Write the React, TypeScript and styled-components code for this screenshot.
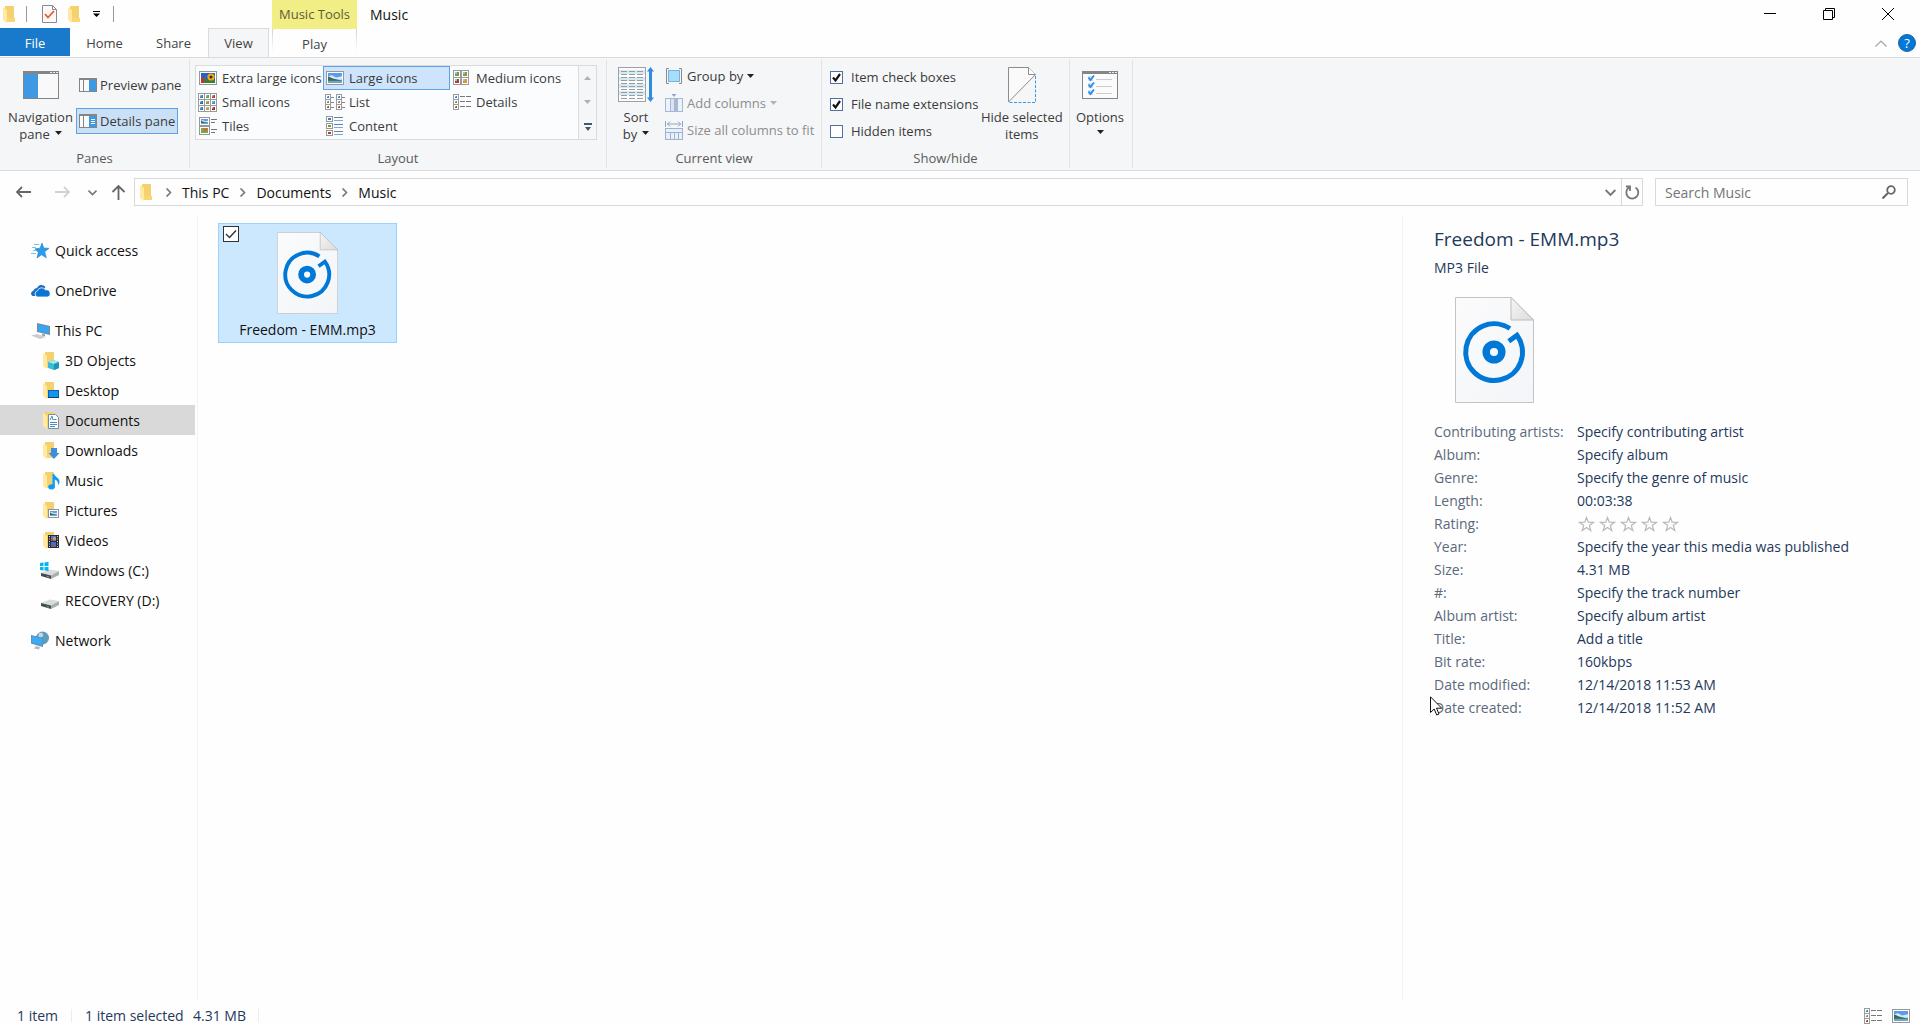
import React from "react";
import styled, { createGlobalStyle, css } from "styled-components";

const line = "#dadbdc";
const ink = "#1e395b";
const blue = "#0078d7";

const GlobalStyle = createGlobalStyle`
  *, *::before, *::after { box-sizing: border-box; }
  body { margin: 0; background: #fefefe; }
  body, button, input { font-family: "Open Sans", "Noto Sans", sans-serif; font-size: 14px; }
  button { padding: 0; border: 0; background: none; color: inherit; }
  svg { display: block; flex: none; }
`;

/* ---------- window frame ---------- */

const Window = styled.div`
  display: flex;
  flex-direction: column;
  min-height: 100vh;
  color: #111;
  line-height: 20px;
`;

const Header = styled.header`
  display: flex;
  height: 57px;
`;

const HeaderLeft = styled.div`
  display: flex;
  flex-direction: column;
  width: 272px;
`;

const QuickBar = styled.div`
  display: flex;
  align-items: center;
  height: 29px;
  padding-left: 3px;
`;

const QuickButton = styled.button<{ $w: number }>`
  display: flex;
  justify-content: center;
  width: ${(p) => p.$w}px;
`;

const QuickSeparator = styled.span<{ $gap: number }>`
  width: 1px;
  height: 16px;
  margin: 0 ${(p) => p.$gap}px 0 11px;
  background: #999;
`;

const TabStrip = styled.nav`
  display: flex;
  height: 29px;
  font-size: 13px;
  color: #444;
`;

const Tab = styled.button<{ $kind?: "file" | "active" }>`
  width: 69px;
  height: 28px;
  padding-top: 2px;
  font-size: 13px;
  ${(p) =>
    p.$kind === "file" &&
    css`
      width: 70px;
      background: #1979ca;
      color: #fff;
    `}
  ${(p) =>
    p.$kind === "active" &&
    css`
      width: 61px;
      height: 29px;
      padding-top: 0;
      border: 1px solid ${line};
      border-bottom: 0;
      background: #f5f6f7;
    `}
`;

const ToolTabs = styled.div`
  display: flex;
  flex-direction: column;
  width: 85px;
`;

const ToolTitle = styled.div`
  height: 29px;
  padding-top: 4px;
  background: #f0ee84;
  color: #5e5c3a;
  font-size: 13px;
  text-align: center;
`;

const ToolTab = styled.button`
  height: 28px;
  padding-top: 2px;
  border: solid;
  border-width: 0 1px;
  border-image: linear-gradient(#d0d1d2, #fefefe 80%) 1;
  color: #444;
  font-size: 13px;
`;

const WindowTitle = styled.h1`
  flex: 1;
  margin: 0;
  padding: 5px 0 0 13px;
  font-size: 14px;
  font-weight: 400;
  line-height: 20px;
`;

const HeaderRight = styled.div`
  display: flex;
  flex-direction: column;
  align-items: flex-end;
`;

const Controls = styled.div`
  display: flex;
  height: 29px;
  padding-right: 3px;
`;

const ControlButton = styled.button`
  display: flex;
  align-items: center;
  justify-content: center;
  width: 59px;
  height: 28px;
`;

const HelpRow = styled.div`
  display: flex;
  align-items: center;
  gap: 11px;
  height: 28px;
  padding-right: 4px;
`;

const HelpButton = styled.button`
  width: 18px;
  height: 18px;
  border: 1px solid #2a62a0;
  border-radius: 50%;
  background: ${blue};
  color: #fff;
  font-size: 13px;
  line-height: 16px;
`;

/* ---------- ribbon ---------- */

const Ribbon = styled.section`
  display: flex;
  height: 114px;
  padding: 2px 0;
  border: solid ${line};
  border-width: 1px 0;
  background: #f5f6f7;
  color: #3b3b3b;
  font-size: 13px;
  line-height: 17px;

  button {
    font-size: 13px;
    line-height: 17px;
  }
`;

const Group = styled.div<{ $w: number }>`
  display: flex;
  flex-direction: column;
  width: ${(p) => p.$w}px;
  border-right: 1px solid #e2e3e4;
`;

const GroupBody = styled.div<{ $left?: number; $gap?: number }>`
  display: flex;
  gap: ${(p) => p.$gap ?? 0}px;
  height: 89px;
  padding-left: ${(p) => p.$left ?? 5}px;
`;

const GroupLabel = styled.div`
  height: 20px;
  color: #5a5a5a;
  line-height: 20px;
  text-align: center;
`;

const BigButton = styled.button<{ $w: number }>`
  display: flex;
  flex-direction: column;
  align-items: center;
  width: ${(p) => p.$w}px;
  padding-top: 6px;
  white-space: nowrap;
`;

const BigIcon = styled.span`
  display: flex;
  align-items: center;
  height: 38px;
  margin-bottom: 5px;
`;

const Stack = styled.div<{ $gap: number; $top: number }>`
  display: flex;
  flex-direction: column;
  align-items: flex-start;
  gap: ${(p) => p.$gap}px;
  padding-top: ${(p) => p.$top}px;
`;

const PaneButton = styled.button<{ $on?: boolean }>`
  display: flex;
  align-items: center;
  gap: 3px;
  height: 26px;
  padding: 0 2px;
  border: 1px solid ${(p) => (p.$on ? "#62a2e4" : "transparent")};
  background: ${(p) => (p.$on ? "#c9e0f7" : "transparent")};
  white-space: nowrap;
`;

const SmallButton = styled.button`
  display: flex;
  align-items: center;
  gap: 4px;
  height: 24px;
  white-space: nowrap;

  &:disabled {
    color: #8d8d8d;
  }
`;

const GalleryBox = styled.div`
  display: flex;
  width: 402px;
  height: 75px;
  margin-top: 5px;
`;

const Gallery = styled.div`
  display: grid;
  flex: 1;
  grid-template-columns: repeat(3, 127px);
  grid-auto-rows: 24px;
  border: 1px solid ${line};
  background: #fbfcfd;
`;

const GalleryItem = styled.button<{ $on?: boolean }>`
  display: flex;
  align-items: center;
  gap: 4px;
  padding-left: 1px;
  border: 1px solid ${(p) => (p.$on ? "#62a2e4" : "transparent")};
  background: ${(p) => (p.$on ? "#cde4fc" : "transparent")};
  white-space: nowrap;
`;

const GalleryScroll = styled.div`
  display: flex;
  flex-direction: column;
  width: 18px;
  border: 1px solid ${line};
  border-left: 0;

  button {
    display: flex;
    flex: 1;
    align-items: center;
    justify-content: center;
  }
`;

const CheckLabel = styled.label`
  display: flex;
  align-items: center;
  gap: 8px;
  height: 20px;
  white-space: nowrap;
`;

const CheckWrap = styled.span`
  display: grid;
  place-items: center;

  > * {
    grid-area: 1 / 1;
  }
  svg {
    pointer-events: none;
  }
  input:not(:checked) + svg {
    visibility: hidden;
  }
`;

const CheckInput = styled.input<{ $size: number; $edge: string }>`
  appearance: none;
  width: ${(p) => p.$size}px;
  height: ${(p) => p.$size}px;
  margin: 0;
  border: 1px solid ${(p) => p.$edge};
  background: #fff;
`;

/* ---------- address bar ---------- */

const AddressRow = styled.div`
  display: flex;
  align-items: center;
  height: 42px;
  padding-right: 12px;
`;

const NavButtons = styled.div`
  display: flex;
  align-items: center;
  width: 134px;
  padding-left: 14px;
`;

const NavButton = styled.button<{ $w: number }>`
  display: flex;
  align-items: center;
  width: ${(p) => p.$w}px;
  height: 28px;
`;

const AddressBox = styled.div`
  display: flex;
  flex: 1;
  align-items: center;
  height: 28px;
  padding-left: 5px;
  border: 1px solid #d9d9d9;
`;

const Crumbs = styled.div`
  display: flex;
  flex: 1;
  align-items: center;
  gap: 9px;
  padding-left: 12px;
`;

const AddressButton = styled.button<{ $edge?: boolean }>`
  display: flex;
  align-items: center;
  justify-content: center;
  width: 21px;
  height: 26px;
  border-left: ${(p) => (p.$edge ? "1px solid #d9d9d9" : "0")};
`;

const SearchBox = styled.label`
  display: flex;
  align-items: center;
  width: 253px;
  height: 28px;
  margin-left: 12px;
  padding: 0 11px 0 9px;
  border: 1px solid #d9d9d9;
`;

const SearchInput = styled.input`
  flex: 1;
  min-width: 0;
  padding: 0;
  border: 0;
  outline: 0;
  background: none;

  &::placeholder {
    color: #757575;
    opacity: 1;
  }
`;

/* ---------- body ---------- */

const Body = styled.div`
  display: flex;
  flex: 1;
  padding-top: 2px;
`;

const Sidebar = styled.nav`
  display: flex;
  flex-direction: column;
  gap: 10px;
  width: 198px;
  padding: 20px 2px 0 0;
  border-right: 1px solid #f3f3f3;
`;

const Branch = styled.div`
  display: flex;
  flex-direction: column;
`;

const TreeLink = styled.a<{ $child?: boolean; $on?: boolean }>`
  display: flex;
  align-items: center;
  gap: 5px;
  height: 30px;
  padding: 1px 0 0 ${(p) => (p.$child ? 40 : 30)}px;
  background: ${(p) => (p.$on ? "#d9d9d9" : "transparent")};
  color: #111;
  text-decoration: none;
  white-space: nowrap;
`;

const Files = styled.main`
  flex: 1;
  padding: 8px 20px;
`;

const Tile = styled.div`
  position: relative;
  display: flex;
  flex-direction: column;
  align-items: center;
  width: 179px;
  height: 120px;
  padding-top: 8px;
  border: 1px solid #99d1ff;
  background: #cce8ff;
`;

const TileCheck = styled.label`
  position: absolute;
  top: 2px;
  left: 4px;
`;

const TileName = styled.span`
  margin-top: 6px;
`;

const Details = styled.aside`
  position: relative;
  width: 518px;
  padding: 10px 0 0 31px;
  border-left: 1px solid #f3f3f3;
  color: ${ink};
`;

const DetailsTitle = styled.h2`
  margin: 0;
  font-size: 19px;
  font-weight: 400;
  line-height: 28px;
`;

const DetailsType = styled.p`
  margin: 5px 0 0;
`;

const Preview = styled.div`
  padding: 19px 0 17px 21px;
`;

const Properties = styled.dl`
  display: grid;
  grid-template-columns: 143px 1fr;
  grid-auto-rows: 23px;
  margin: 0;
  line-height: 23px;
`;

const Term = styled.dt`
  color: #5b697c;
`;

const Value = styled.dd`
  display: flex;
  align-items: center;
  margin: 0;
`;

const Star = styled.button`
  width: 21px;
  padding-left: 1px;
`;

const Pointer = styled.span`
  position: absolute;
  top: 481px;
  left: 27px;
`;

const StatusBar = styled.footer`
  display: flex;
  align-items: center;
  height: 25px;
  padding: 4px 9px 0 17px;
  color: ${ink};
`;

const StatusCell = styled.span<{ $w: number }>`
  width: ${(p) => p.$w}px;
`;

const StatusEdge = styled.span`
  width: 1px;
  height: 13px;
  margin-right: 13px;
  background: #ececec;
`;

const StatusViews = styled.div`
  display: flex;
  gap: 8px;
  margin-left: auto;
`;

/* ---------- drawings ---------- */

const Caret = ({ color = "#222" }: { color?: string }) => (
  <svg width="7" height="4" viewBox="0 0 7 4"><path d="M0 0h7L3.5 4z" fill={color} /></svg>
);

const CaretInline = styled.span`
  display: inline-flex;
  padding-left: 5px;
  vertical-align: 4px;
`;

const CaretBelow = styled.span`
  margin-top: 4px;
`;

const FolderShape = () => (
  <>
    <path d="M2 0h9v12h1v4H2z" fill="#f7d774" />
    <path d="M2 0h9v12H7L2 8z" fill="#f4d06e" />
    <path d="M0 1l4 3v13l-4-3z" fill="#ffe9a3" />
  </>
);

const Folder = () => (
  <svg width="12" height="17" viewBox="0 0 12 17"><FolderShape /></svg>
);

const FolderWith = ({ children }: { children: React.ReactNode }) => (
  <svg width="20" height="20" viewBox="0 0 20 20">
    <g transform="translate(3 1)"><FolderShape /></g>
    {children}
  </svg>
);

const Chevron = ({ dir, color = "#777", size = 9 }: { dir: "right" | "down"; color?: string; size?: number }) => (
  <svg width={size} height={size} viewBox="0 0 9 9" fill="none" stroke={color} strokeWidth="1.6">
    <path d={dir === "right" ? "M2.5 .5l4 4-4 4" : "M.5 2.5l4 4 4-4"} />
  </svg>
);

const Landscape = ({ x = 0, y = 0, w = 14, h = 9 }) => (
  <svg x={x} y={y} width={w} height={h} viewBox="0 0 14 9" preserveAspectRatio="none">
    <rect width="14" height="9" fill="#5b9bea" />
    <path d="M0 3l4-1 4 2 6-1v3H0z" fill="#d6ecfa" />
    <path d="M0 3l5 2 9 2v1H0z" fill="#3c6b5a" />
    <path d="M0 7h14v2H0z" fill="#6fa6c6" />
  </svg>
);

const PictureIcon = ({ flower }: { flower?: boolean }) => (
  <svg width="20" height="18" viewBox="0 0 20 18">
    <rect x="1.5" y="2.5" width="17" height="13" fill="#fff" stroke="#979797" />
    {flower ? (
      <>
        <rect x="3" y="4" width="14" height="10" fill="#2d5fc4" />
        <path d="M3 11l3-3 3 3 3-1 5 1v3H3z" fill="#3f7d33" />
        <path d="M3 8l3 2v4H3z" fill="#c8322b" />
        <circle cx="13" cy="8" r="3.6" fill="#e7ad1c" />
        <circle cx="13" cy="8" r="1.5" fill="#4b2410" />
      </>
    ) : (
      <Landscape x={3} y={4} w={14} h={10} />
    )}
  </svg>
);

const thumbColors = ["#3b7fc4", "#6f9f3a", "#c0392b", "#2f6d8e", "#8a9a3c", "#4b8ed0", "#3a77b8", "#d8952c", "#b5231c"];

const Thumb = ({ x, y, s, n }: { x: number; y: number; s: number; n: number }) => (
  <>
    <rect x={x + 0.5} y={y + 0.5} width={s - 1} height={s - 1} fill="#fff" stroke="#9a9a9a" />
    <rect x={x + 2} y={y + 2} width={s - 4} height={s - 4} fill={thumbColors[n % 9]} />
    <rect x={x + 2} y={y + 2} width={(s - 4) / 2} height={(s - 4) / 2} fill="#8cc5ea" />
  </>
);

const MediumIcon = () => (
  <svg width="20" height="18" viewBox="0 0 20 18">
    <Thumb x={1} y={1} s={8} n={1} /><Thumb x={9} y={1} s={8} n={4} />
    <Thumb x={1} y={8} s={8} n={2} /><Thumb x={9} y={8} s={8} n={7} />
  </svg>
);

const SmallIcon = () => (
  <svg width="20" height="20" viewBox="0 0 20 20">
    {[0, 1, 2, 3, 4, 5, 6, 7, 8].map((i) => (
      <Thumb key={i} x={(i % 3) * 6} y={Math.floor(i / 3) * 6 + 1} s={7} n={i} />
    ))}
  </svg>
);

const ListIcon = () => (
  <svg width="20" height="18" viewBox="0 0 20 18">
    {[0, 1, 2].map((i) => (
      <g key={i}>
        <Thumb x={0} y={i * 5 + 1} s={6} n={i} /><Thumb x={11} y={i * 5 + 1} s={6} n={i} />
        <path d={`M6 ${i * 5 + 4.5}h3M17 ${i * 5 + 4.5}h3`} stroke="#888" />
      </g>
    ))}
  </svg>
);

const DetailsIcon = () => (
  <svg width="20" height="18" viewBox="0 0 20 18">
    {[0, 1, 2].map((i) => (
      <g key={i}>
        <Thumb x={1} y={i * 5 + 1} s={6} n={i} />
        <path d={`M8 ${i * 5 + 3.5}h5M14 ${i * 5 + 3.5}h5`} stroke="#777" />
      </g>
    ))}
  </svg>
);

const TilesIcon = () => (
  <svg width="20" height="20" viewBox="0 0 20 20">
    <rect x="1.5" y="1.5" width="10" height="8" fill="#fff" stroke="#979797" />
    <Landscape x={3} y={3} w={7} h={5} />
    <rect x="1.5" y="10.5" width="10" height="8" fill="#fff" stroke="#979797" />
    <rect x="3" y="12" width="7" height="5" fill="#79a945" />
    <rect x="6" y="12" width="3" height="3" fill="#d9604c" />
    <path d="M13 3.5h6M13 6.5h4M13 13.5h6M13 16.5h4" stroke="#777" />
  </svg>
);

const ContentIcon = () => (
  <svg width="20" height="20" viewBox="0 0 20 20">
    {[0, 1, 2].map((i) => (
      <g key={i}>
        <rect x="1.5" y={i * 7 + 0.5} width="6" height="5" fill="#fff" stroke="#979797" />
        <rect x="3" y={i * 7 + 2} width="3" height="2" fill={thumbColors[i]} />
        <path d={`M9 ${i * 7 + 1.5}h9`} stroke="#777f8a" />
        <path d={`M9 ${i * 7 + 4.5}h9`} stroke="#74a9f0" />
      </g>
    ))}
  </svg>
);

const NavPaneIcon = () => (
  <svg width="36" height="28" viewBox="0 0 36 28">
    <rect x=".5" y=".5" width="35" height="27" fill="#f9f9f9" stroke="#858585" />
    <path d="M0 0h36v3H0z" fill="#858585" />
    <path d="M27 1.5h2M30 1.5h2M33 1.5h2" stroke="#eee" />
    <path d="M1 3h14v24H1z" fill="#3f98e2" />
  </svg>
);

const SidePaneIcon = ({ lines }: { lines?: boolean }) => (
  <svg width="18" height="15" viewBox="0 0 18 15">
    <rect x=".5" y=".5" width="17" height="13" fill="#fbfbfb" stroke="#858585" />
    <path d="M0 0h18v2H0z" fill="#858585" />
    <path d="M4.5 2v12" stroke="#858585" />
    <path d="M10 2h7v11h-7z" fill="#3f98e2" />
    {lines && <path d="M12 5.5h4M12 7.5h4M12 9.5h4" stroke="#fff" />}
  </svg>
);

const SortIcon = () => (
  <svg width="36" height="36" viewBox="0 0 36 36">
    <rect x=".5" y=".5" width="27" height="34" fill="#fcfcfc" stroke="#a0a0a0" />
    <path d="M1 3h26v4H1zM1 10h26v4H1zM1 17h26v4H1zM1 24h26v4H1z" fill="#d4ebf5" />
    {[4, 7, 10, 13, 16, 19, 22, 25, 28, 31].map((y) => (
      <path key={y} d={`M3 ${y + 0.5}h6M11 ${y + 0.5}h6M19 ${y + 0.5}h6`} stroke="#9c9c9c" />
    ))}
    <path d="M32.5 0l3.5 4.5h-2v26h2L32.5 35 29 30.500h2v-26h-2z" fill="#2e8be0" />
  </svg>
);

const GroupIcon = () => (
  <svg width="18" height="18" viewBox="0 0 18 18">
    <path d="M4 1.5H1.5v15H4M14 1.5h2.5v15H14" fill="none" stroke="#8a8a8a" />
    <rect x="3.5" y="3.5" width="11" height="11" fill="#a8dcfb" stroke="#74b3de" />
  </svg>
);

const AddColumnsIcon = () => (
  <svg width="18" height="18" viewBox="0 0 18 18">
    <path d="M6.5 0h5L9 3z" fill="#93a6c8" />
    <rect x=".5" y="4.5" width="17" height="13" fill="#ebf2fb" stroke="#a9b8d2" />
    <path d="M5.5 5v12M12.5 5v12" stroke="#a9b8d2" />
    <path d="M9 5h4v12H9z" fill="#a9b8d2" /><path d="M6 5h3v12H6z" fill="#d9e3f2" />
  </svg>
);

const SizeColumnsIcon = () => (
  <svg width="18" height="19" viewBox="0 0 18 19">
    <path d="M.5 0v6M17.5 0v6M2 3h14M5 .5L2.5 3 5 5.5M13 .5L15.5 3 13 5.5" fill="none" stroke="#8ea3c9" />
    <rect x=".5" y="7.5" width="17" height="11" fill="#e8f0fa" stroke="#a0b1cf" />
    <path d="M.5 11.5h17M5.5 11.5v7M9.5 11.5v7M13.5 11.5v7" stroke="#a0b1cf" />
  </svg>
);

const HideIcon = () => (
  <svg width="28" height="36" viewBox="0 0 28 36" fill="none">
    <path d="M.5.5h20l7 7L.5 35z" fill="#fafafa" stroke="#8c8c8c" />
    <path d="M20.5.5v7h7" stroke="#8c8c8c" fill="#fff" />
    <path d="M27.5 9v26.5H1" stroke="#3f98e2" strokeDasharray="3 1.5" />
  </svg>
);

const OptionsIcon = () => (
  <svg width="36" height="28" viewBox="0 0 36 28" fill="none">
    <rect x=".5" y=".5" width="35" height="27" fill="#fbfbfb" stroke="#858585" />
    <path d="M0 0h36v3H0z" fill="#858585" />
    <path d="M27 1.5h2M30 1.5h2M33 1.5h2" stroke="#eee" />
    {[5, 12, 19].map((y) => (
      <g key={y}>
        <rect x="6" y={y} width="5" height="5" fill="#cfe3f4" />
        <path d={`M6.5 ${y + 1.5}l2 2.5 3.5-4.5`} stroke="#2f8de0" strokeWidth="1.8" />
        <path d={`M14 ${y + 3.5}h16`} stroke="#ccc" />
      </g>
    ))}
  </svg>
);

const MusicFile = ({ w, h }: { w: number; h: number }) => (
  <svg width={w} height={h} viewBox="0 0 79 106" fill="none">
    <defs>
      <linearGradient id="sheet" x1="0" y1="0" x2="1" y2="1">
        <stop offset="0" stopColor="#fbfbfc" /><stop offset="1" stopColor="#f3f5f8" />
      </linearGradient>
      <linearGradient id="fold" x1="0" y1="0" x2="1" y2="1">
        <stop offset="0" stopColor="#f6f6f6" /><stop offset="1" stopColor="#dcdcdc" />
      </linearGradient>
    </defs>
    <path d="M.5.5h55.5l22.5 22.5v82.5H.5z" fill="url(#sheet)" stroke="#c3c4c6" />
    <path d="M56 .5v22.5h22.5z" fill="url(#fold)" stroke="#bcbcbc" />
    <path d="M54.9 31.5A28.4 28.4 0 1 0 62 38.3L53.800 44.200" stroke={blue} strokeWidth="5" />
    <circle cx="39" cy="55" r="7.8" stroke={blue} strokeWidth="7.5" />
  </svg>
);

const QuickAccessIcon = () => (
  <svg width="20" height="18" viewBox="0 0 20 18">
    <path d="M12 1l1.700 5 5.300.3-4.300 3.400 1.600 6-4.800-3L7 16l1.300-5.500L5 6.800l5-.6z" fill="#2c9be9" stroke="#1b7fc9" strokeWidth=".6" />
    <path d="M4 2.500h5M2 5.500h4M3 8.500h3M1 11.500h5" stroke="#7fc0ef" />
  </svg>
);

const CloudIcon = () => (
  <svg width="20" height="14" viewBox="0 0 20 14">
    <path d="M2.5 12A2.8 2.8 0 0 1 3.4 6.8 4 4 0 0 1 7 4a5 5 0 0 1 8.5-1L8 12z" fill="#1a6fc4" />
    <path d="M7.5 13a3.2 3.2 0 0 1 0-6.2A4.400 4.400 0 0 1 15.5 6a3.6 3.6 0 0 1 2 7z" fill="#0a75d6" stroke="#fff" strokeWidth=".8" />
  </svg>
);

const PCIcon = () => (
  <svg width="20" height="18" viewBox="0 0 20 18">
    <path d="M7 1l13 3v9L7 10z" fill="#7c8894" />
    <path d="M8 2.2l11 2.6v7L8 9.2z" fill="#35a6f2" />
    <path d="M12 11.5l3 .7v2l-3-.5z" fill="#9aa3ab" />
    <path d="M1 13.5l6-1.5 9 3-6 2z" fill="#c9ced3" />
  </svg>
);

const DriveIcon = ({ os }: { os?: boolean }) => (
  <svg width="20" height="20" viewBox="0 0 20 20">
    <path d="M1 12l9-3.500 9 1.500-8 4.500z" fill="#d9dbdd" />
    <path d="M1 12l10 2.500V18L1 15z" fill="#474b4e" />
    <path d="M11 14.500L19 10v4l-8 4z" fill="#a9adb0" />
    <path d="M7 15.500l2 .6" stroke="#52d053" />
    {os && <path d="M0 2l3.500-.5V5H0zM4.500 1.400l4-.6V5h-4zM0 6h3.500v3.500L0 9zM4.500 6h4v4l-4-.5z" fill="#00b7f0" />}
  </svg>
);

const NetworkIcon = () => (
  <svg width="20" height="19" viewBox="0 0 20 19">
    <circle cx="12.5" cy="7" r="6.5" fill="#5d9cba" />
    <path d="M9 2c3-1 5 1 4 3s-4 1-5 3z" fill="#bcdbe7" />
    <path d="M1 4l12 3v9L1 12.5z" fill="#6b8397" />
    <path d="M1.5 4.8l11 2.8v7.2l-11-3z" fill="#3daaf5" />
    <path d="M6 15l4 1-1 2.5-5-1z" fill="#b3bbc2" />
  </svg>
);

const CubeIcon = () => (
  <FolderWith>
    <path d="M8 11l5-2 6 2v6l-5 2-6-2z" fill="#39bcd3" />
    <path d="M8 11l5-2 6 2-5 2z" fill="#a3e6ee" /><path d="M14 13l5-2v6l-5 2z" fill="#1797b4" />
  </FolderWith>
);
const DesktopIcon = () => (
  <FolderWith>
    <rect x="8.5" y="9.5" width="10" height="7" fill="#1496f0" stroke="#0d5fa8" /><path d="M8 16.5h11" stroke="#0a3f73" />
  </FolderWith>
);
const DocumentIcon = () => (
  <FolderWith>
    <path d="M8.5 3.5h7l3 3v11h-10z" fill="#fff" stroke="#7f8a94" />
    <path d="M10 9l2-4 1 4M13.5 8.5h3M10 11.5h7M10 13.5h7M10 15.5h5" fill="none" stroke="#3e8fcc" />
  </FolderWith>
);
const DownloadIcon = () => (
  <FolderWith><path d="M11 7h6v5h2.5L14 18l-5.5-6H11z" fill="#3b8ede" /></FolderWith>
);
const MusicIcon = () => (
  <FolderWith>
    <ellipse cx="11.5" cy="15.8" rx="3.3" ry="2.6" fill="#0a9bf5" />
    <path d="M12.500 16V3h1.500c1 3 6 4 5.500 8.500l-1.500 3c.5-3.500-1-5-3.200-6V16z" fill="#0a9bf5" />
  </FolderWith>
);
const PicturesIcon = () => (
  <FolderWith>
    <rect x="8.5" y="8.5" width="10" height="8" fill="#fff" stroke="#929292" /><Landscape x={10} y={10} w={7} h={5} />
  </FolderWith>
);
const VideosIcon = () => (
  <FolderWith>
    <rect x="8" y="4" width="11" height="13" fill="#2c2c34" />
    <path d="M9.5 5v11M17.5 5v11" stroke="#ddd" strokeDasharray="1 1.5" />
    <rect x="11" y="5" width="5" height="5" fill="#4a7cd8" /><rect x="11" y="11" width="5" height="5" fill="#3b70d0" />
    <circle cx="14.5" cy="7.5" r="1.5" fill="#e6a52b" /><path d="M11 8h2v2h-2zM12 14h2v2h-2z" fill="#c4453a" />
  </FolderWith>
);

const Tick = () => (
  <svg width="13" height="13" viewBox="0 0 13 13" fill="none">
    <path d="M3 6.5l2.5 3L10 3" stroke="#151515" strokeWidth="2.2" />
  </svg>
);

/* ---------- content ---------- */

const galleryItems = [
  { name: "Extra large icons", icon: <PictureIcon flower /> },
  { name: "Large icons", icon: <PictureIcon />, on: true },
  { name: "Medium icons", icon: <MediumIcon /> },
  { name: "Small icons", icon: <SmallIcon /> },
  { name: "List", icon: <ListIcon /> },
  { name: "Details", icon: <DetailsIcon /> },
  { name: "Tiles", icon: <TilesIcon /> },
  { name: "Content", icon: <ContentIcon /> },
];

const places = [
  { name: "3D Objects", icon: <CubeIcon /> },
  { name: "Desktop", icon: <DesktopIcon /> },
  { name: "Documents", icon: <DocumentIcon />, on: true },
  { name: "Downloads", icon: <DownloadIcon /> },
  { name: "Music", icon: <MusicIcon /> },
  { name: "Pictures", icon: <PicturesIcon /> },
  { name: "Videos", icon: <VideosIcon /> },
  { name: "Windows (C:)", icon: <DriveIcon os /> },
  { name: "RECOVERY (D:)", icon: <DriveIcon /> },
];

const stars = (
  <>
    {[1, 2, 3, 4, 5].map((n) => (
      <Star key={n} aria-label={`${n} stars`}>
        <svg width="17" height="16" viewBox="0 0 17 16">
          <path d="M8.5 1.5l1.700 4.700 5.300.1-4.200 3.200 1.500 5-4.300-3-4.300 3 1.500-5L1.500 6.300l5.300-.1z" fill="none" stroke="#b9b9b9" strokeWidth="1.2" />
        </svg>
      </Star>
    ))}
  </>
);

const properties: [string, React.ReactNode][] = [
  ["Contributing artists:", "Specify contributing artist"],
  ["Album:", "Specify album"],
  ["Genre:", "Specify the genre of music"],
  ["Length:", "00:03:38"],
  ["Rating:", stars],
  ["Year:", "Specify the year this media was published"],
  ["Size:", "4.31 MB"],
  ["#:", "Specify the track number"],
  ["Album artist:", "Specify album artist"],
  ["Title:", "Add a title"],
  ["Bit rate:", "160kbps"],
  ["Date modified:", "12/14/2018 11:53 AM"],
  ["Date created:", "12/14/2018 11:52 AM"],
];

const Option = ({ label, checked }: { label: string; checked?: boolean }) => (
  <CheckLabel>
    <CheckWrap>
      <CheckInput type="checkbox" defaultChecked={checked} $size={13} $edge="#52709f" />
      <Tick />
    </CheckWrap>
    {label}
  </CheckLabel>
);

export default function App() {
  return (
    <Window>
      <GlobalStyle />
      <Header>
        <HeaderLeft>
          <QuickBar>
            <QuickButton $w={12} aria-label="Window menu"><Folder /></QuickButton>
            <QuickSeparator $gap={15} />
            <QuickButton $w={15} aria-label="Properties">
              <svg width="15" height="18" viewBox="0 0 15 18" fill="none">
                <path d="M.5.5h10l4 4v13H.5z" fill="#fafafa" stroke="#8a8a8a" />
                <path d="M10.5.5v4h4" stroke="#8a8a8a" />
                <path d="M3 9l3 3.5L12 6" stroke="#ef5a1c" strokeWidth="1.8" />
              </svg>
            </QuickButton>
            <QuickButton $w={34} aria-label="New folder"><Folder /></QuickButton>
            <QuickButton $w={11} aria-label="Customize toolbar">
              <svg width="7" height="6" viewBox="0 0 7 6"><path d="M0 0h7v1H0zM0 2.5h7L3.5 6z" /></svg>
            </QuickButton>
            <QuickSeparator $gap={0} />
          </QuickBar>
          <TabStrip>
            <Tab $kind="file">File</Tab>
            <Tab>Home</Tab>
            <Tab>Share</Tab>
            <Tab $kind="active">View</Tab>
          </TabStrip>
        </HeaderLeft>
        <ToolTabs>
          <ToolTitle>Music Tools</ToolTitle>
          <ToolTab>Play</ToolTab>
        </ToolTabs>
        <WindowTitle>Music</WindowTitle>
        <HeaderRight>
          <Controls>
            <ControlButton aria-label="Minimize">
              <svg width="12" height="12" stroke="#000"><path d="M0 5.5h12" /></svg>
            </ControlButton>
            <ControlButton aria-label="Restore">
              <svg width="12" height="12" fill="none" stroke="#000"><path d="M.5 2.5h9v9h-9zM2.5 2V.5h9v9H10" /></svg>
            </ControlButton>
            <ControlButton aria-label="Close">
              <svg width="12" height="12" stroke="#000"><path d="M0 0l12 12M12 0L0 12" /></svg>
            </ControlButton>
          </Controls>
          <HelpRow>
            <button aria-label="Collapse ribbon">
              <svg width="12" height="7" fill="none" stroke="#a5a5a5" strokeWidth="1.2"><path d="M.5 6.5L6 1l5.500 5.500" /></svg>
            </button>
            <HelpButton>?</HelpButton>
          </HelpRow>
        </HeaderRight>
      </Header>

      <Ribbon>
        <Group $w={190}>
          <GroupBody>
            <BigButton $w={71}>
              <BigIcon><NavPaneIcon /></BigIcon>
              <span>Navigation</span>
              <span>pane<CaretInline><Caret /></CaretInline></span>
            </BigButton>
            <Stack $gap={10} $top={12}>
              <PaneButton><SidePaneIcon />Preview pane</PaneButton>
              <PaneButton $on><SidePaneIcon lines />Details pane</PaneButton>
            </Stack>
          </GroupBody>
          <GroupLabel>Panes</GroupLabel>
        </Group>

        <Group $w={417}>
          <GroupBody>
            <GalleryBox>
              <Gallery>
                {galleryItems.map((g) => (
                  <GalleryItem key={g.name} $on={g.on}>{g.icon}{g.name}</GalleryItem>
                ))}
              </Gallery>
              <GalleryScroll>
                <button aria-label="Scroll up"><svg width="7" height="4"><path d="M0 4h7L3.5 0z" fill="#aab2bb" /></svg></button>
                <button aria-label="Scroll down"><Caret color="#aab2bb" /></button>
                <button aria-label="More layouts">
                  <svg width="8" height="8"><path d="M0 0h8v2H0zM1 4h6L4 8z" fill="#44546a" /></svg>
                </button>
              </GalleryScroll>
            </GalleryBox>
          </GroupBody>
          <GroupLabel>Layout</GroupLabel>
        </Group>

        <Group $w={215}>
          <GroupBody $gap={5}>
            <BigButton $w={48}>
              <BigIcon><SortIcon /></BigIcon>
              <span>Sort</span>
              <span>by<CaretInline><Caret /></CaretInline></span>
            </BigButton>
            <Stack $gap={3} $top={4}>
              <SmallButton><GroupIcon />Group by <Caret /></SmallButton>
              <SmallButton disabled><AddColumnsIcon />Add columns <Caret color="#b4b4b4" /></SmallButton>
              <SmallButton disabled><SizeColumnsIcon />Size all columns to fit</SmallButton>
            </Stack>
          </GroupBody>
          <GroupLabel>Current view</GroupLabel>
        </Group>

        <Group $w={248}>
          <GroupBody $left={8}>
            <Stack $gap={7} $top={7}>
              <Option label="Item check boxes" checked />
              <Option label="File name extensions" checked />
              <Option label="Hidden items" />
            </Stack>
            <BigButton $w={87}>
              <BigIcon><HideIcon /></BigIcon>
              <span>Hide selected</span>
              <span>items</span>
            </BigButton>
          </GroupBody>
          <GroupLabel>Show/hide</GroupLabel>
        </Group>

        <Group $w={63}>
          <GroupBody>
            <BigButton $w={50}>
              <BigIcon><OptionsIcon /></BigIcon>
              <span>Options</span>
              <CaretBelow><Caret /></CaretBelow>
            </BigButton>
          </GroupBody>
        </Group>
      </Ribbon>

      <AddressRow>
        <NavButtons>
          <NavButton $w={40} aria-label="Back">
            <svg width="18" height="14" fill="none" stroke="#666" strokeWidth="1.8"><path d="M17 7H3M8 2L3 7l5 5" /></svg>
          </NavButton>
          <NavButton $w={34} aria-label="Forward">
            <svg width="18" height="14" fill="none" stroke="#d2d2d2" strokeWidth="1.8"><path d="M1 7h14M10 2l5 5-5 5" /></svg>
          </NavButton>
          <NavButton $w={23} aria-label="Recent locations"><Chevron dir="down" /></NavButton>
          <NavButton $w={18} aria-label="Up">
            <svg width="15" height="16" fill="none" stroke="#666" strokeWidth="1.8"><path d="M7.5 16V2M1.5 8l6-6 6 6" /></svg>
          </NavButton>
        </NavButtons>
        <AddressBox>
          <Folder />
          <Crumbs>
            <Chevron dir="right" />
            <button>This PC</button>
            <Chevron dir="right" />
            <button>Documents</button>
            <Chevron dir="right" />
            <button>Music</button>
          </Crumbs>
          <AddressButton aria-label="Previous locations"><Chevron dir="down" size={11} /></AddressButton>
          <AddressButton $edge aria-label="Refresh">
            <svg width="15" height="15" viewBox="0 0 15 15" fill="none" stroke="#777" strokeWidth="1.8">
              <path d="M10.5 2.5A6 6 0 1 1 4 2.6M1 1.5h4V6" />
            </svg>
          </AddressButton>
        </AddressBox>
        <SearchBox>
          <SearchInput type="text" placeholder="Search Music" aria-label="Search Music" />
          <svg width="14" height="14" fill="none" stroke="#666"><circle cx="9" cy="5" r="3.8" strokeWidth="1.8" /><path d="M6 8l-5.500 5.500" strokeWidth="2" /></svg>
        </SearchBox>
      </AddressRow>

      <Body>
        <Sidebar>
          <TreeLink href="#"><QuickAccessIcon />Quick access</TreeLink>
          <TreeLink href="#"><CloudIcon />OneDrive</TreeLink>
          <Branch>
            <TreeLink href="#"><PCIcon />This PC</TreeLink>
            {places.map((p) => (
              <TreeLink key={p.name} href="#" $child $on={p.on}>{p.icon}{p.name}</TreeLink>
            ))}
          </Branch>
          <TreeLink href="#"><NetworkIcon />Network</TreeLink>
        </Sidebar>

        <Files>
          <Tile>
            <TileCheck>
              <CheckWrap>
                <CheckInput type="checkbox" defaultChecked aria-label="Select Freedom - EMM.mp3" $size={16} $edge="#333" />
                <svg width="16" height="16" fill="none" stroke="#333" strokeWidth="1.4"><path d="M3 8l3.5 3.5 6.500-7" /></svg>
              </CheckWrap>
            </TileCheck>
            <MusicFile w={61} h={82} />
            <TileName>Freedom - EMM.mp3</TileName>
          </Tile>
        </Files>

        <Details>
          <DetailsTitle>Freedom - EMM.mp3</DetailsTitle>
          <DetailsType>MP3 File</DetailsType>
          <Preview><MusicFile w={79} h={106} /></Preview>
          <Properties>
            {properties.map(([term, value]) => (
              <React.Fragment key={term}>
                <Term>{term}</Term>
                <Value>{value}</Value>
              </React.Fragment>
            ))}
          </Properties>
          <Pointer>
            <svg width="13" height="20" viewBox="0 0 13 20">
              <path d="M.5.8v15.700l3.700-3.500 2.500 6 2.300-1-2.500-5.800h5.200z" fill="#fff" stroke="#111" />
            </svg>
          </Pointer>
        </Details>
      </Body>

      <StatusBar>
        <StatusCell $w={54}>1 item</StatusCell>
        <StatusEdge />
        <StatusCell $w={108}>1 item selected</StatusCell>
        <StatusCell $w={65}>4.31 MB</StatusCell>
        <StatusEdge />
        <StatusViews>
          <button aria-label="Details view"><DetailsIcon /></button>
          <button aria-label="Large icons view"><PictureIcon /></button>
        </StatusViews>
      </StatusBar>
    </Window>
  );
}
